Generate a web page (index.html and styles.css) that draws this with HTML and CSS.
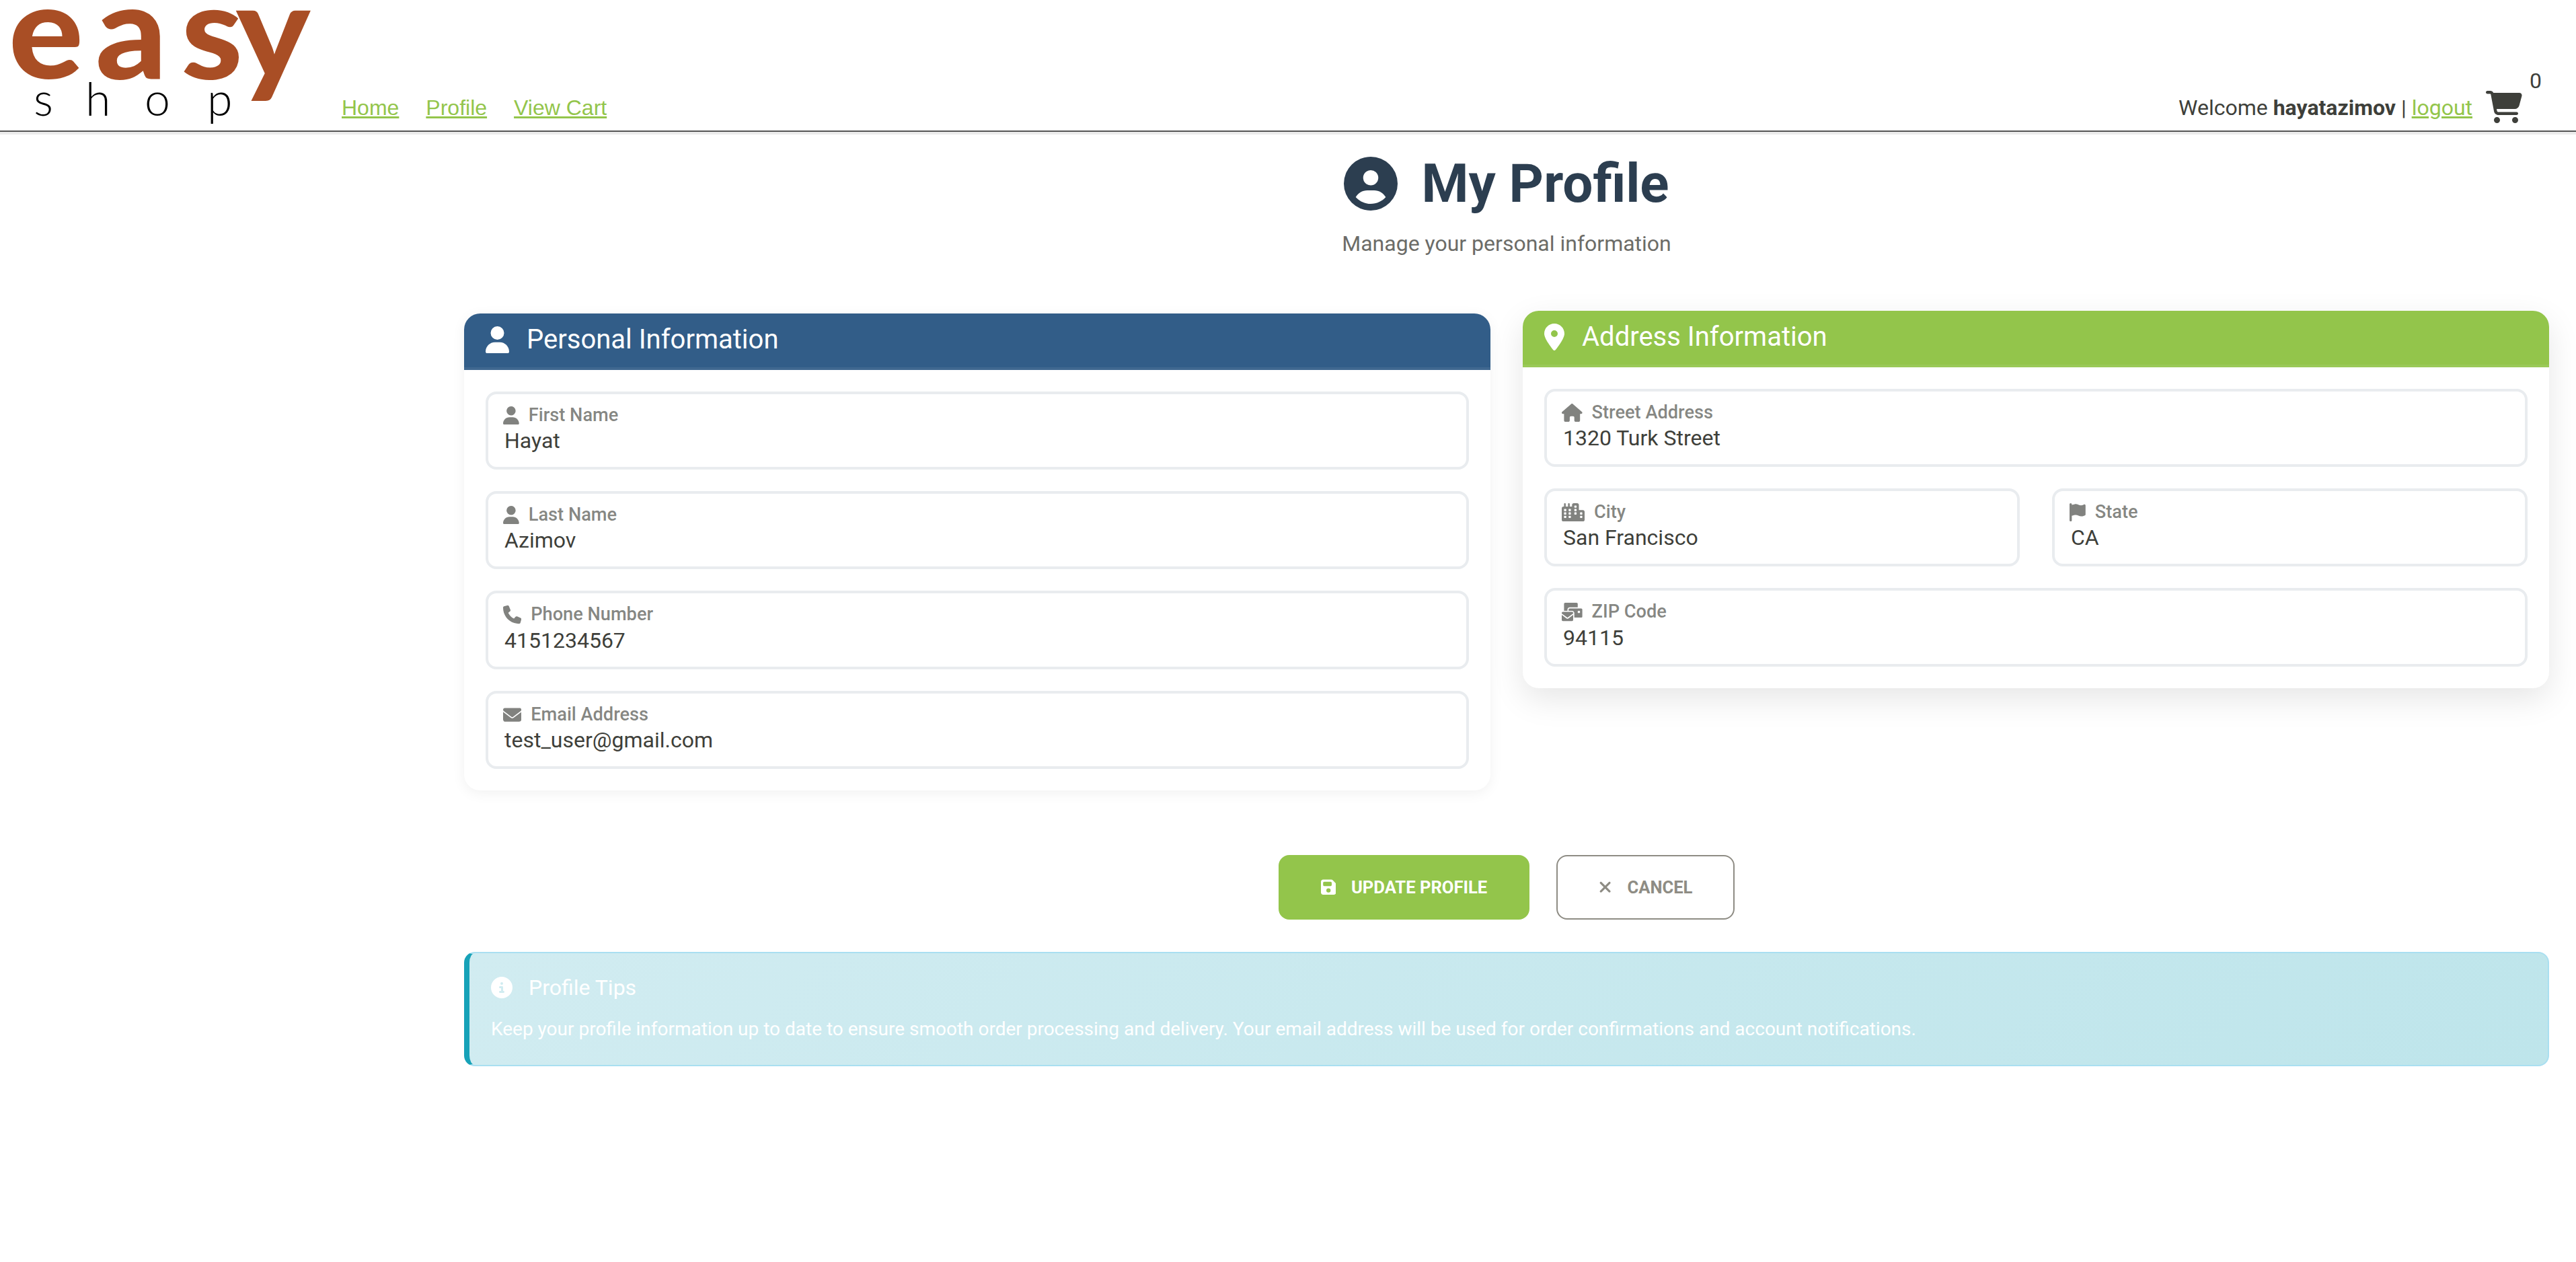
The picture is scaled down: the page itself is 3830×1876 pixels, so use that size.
FILE: index.html
```html
<!DOCTYPE html>
<html lang="en">
<head>
  <meta charset="UTF-8">
  <meta name="viewport" content="width=device-width, initial-scale=1.0">
  <title>My Profile - Easy Shop</title>
  <link rel="stylesheet" href="styles.css">
</head>
<body>
  <header class="site-header">
    <a class="logo" href="#" aria-label="easy shop">
      <svg class="logo-mark" viewBox="0 0 480 194" width="480" height="194">
        <text class="logo-easy" transform="scale(1.06 1)" x="12 134 254 331" y="117">easy</text>
        <text class="logo-shop" x="50 127 215 308" y="172">shop</text>
      </svg>
    </a>
    <nav class="main-nav">
      <a href="#">Home</a>
      <a href="#">Profile</a>
      <a href="#">View Cart</a>
    </nav>
    <div class="user-box">
      <span>Welcome <strong>hayatazimov</strong> | <a href="#">logout</a></span>
      <a class="cart" href="#" aria-label="Cart">
        <svg class="icon" viewBox="0 0 576 512"><path d="M0 24C0 10.7 10.7 0 24 0H69.5c22 0 41.5 12.8 50.6 32h411c26.3 0 45.5 25 38.6 50.4l-41 152.3c-8.5 31.4-37 53.3-69.5 53.3H170.7l5.4 28.5c2.2 11.3 12.1 19.5 23.6 19.5H488c13.3 0 24 10.7 24 24s-10.7 24-24 24H199.7c-34.6 0-64.3-24.6-70.7-58.5L77.4 54.5c-.7-3.8-4-6.5-7.9-6.5H24C10.7 48 0 37.3 0 24zM128 464a48 48 0 1 1 96 0 48 48 0 1 1 -96 0zm336-48a48 48 0 1 1 0 96 48 48 0 1 1 0-96z"/></svg>
        <span class="cart-count">0</span>
      </a>
    </div>
  </header>

  <main class="profile-page">
    <h1 class="page-title">
      <svg class="icon" viewBox="0 0 512 512"><path d="M399 384.2C376.9 345.8 335.4 320 288 320H224c-47.4 0-88.9 25.8-111 64.2c35.2 39.2 86.2 63.8 143 63.8s107.8-24.7 143-63.8zM0 256a256 256 0 1 1 512 0A256 256 0 1 1 0 256zm256 16a72 72 0 1 0 0-144 72 72 0 1 0 0 144z"/></svg>
      My Profile
    </h1>
    <p class="page-subtitle">Manage your personal information</p>

    <form class="profile-form">
      <div class="panels">
        <section class="panel">
          <h2 class="panel-title panel-title-blue">
            <svg class="icon" viewBox="0 0 448 512"><path d="M224 256A128 128 0 1 0 224 0a128 128 0 1 0 0 256zm-45.7 48C79.8 304 0 383.8 0 482.3C0 498.7 13.3 512 29.7 512H418.3c16.4 0 29.7-13.3 29.7-29.7C448 383.8 368.2 304 269.7 304H178.3z"/></svg>
            Personal Information
          </h2>
          <div class="panel-body">
            <div class="field">
              <label for="firstName"><svg class="icon" viewBox="0 0 448 512"><path d="M224 256A128 128 0 1 0 224 0a128 128 0 1 0 0 256zm-45.7 48C79.8 304 0 383.8 0 482.3C0 498.7 13.3 512 29.7 512H418.3c16.4 0 29.7-13.3 29.7-29.7C448 383.8 368.2 304 269.7 304H178.3z"/></svg>First Name</label>
              <input type="text" id="firstName" name="firstName" value="Hayat">
            </div>
            <div class="field">
              <label for="lastName"><svg class="icon" viewBox="0 0 448 512"><path d="M224 256A128 128 0 1 0 224 0a128 128 0 1 0 0 256zm-45.7 48C79.8 304 0 383.8 0 482.3C0 498.7 13.3 512 29.7 512H418.3c16.4 0 29.7-13.3 29.7-29.7C448 383.8 368.2 304 269.7 304H178.3z"/></svg>Last Name</label>
              <input type="text" id="lastName" name="lastName" value="Azimov">
            </div>
            <div class="field">
              <label for="phone"><svg class="icon" viewBox="0 0 512 512"><path d="M164.9 24.6c-7.7-18.6-28-28.5-47.4-23.2l-88 24C12.1 30.2 0 46 0 64C0 311.4 200.6 512 448 512c18 0 33.8-12.1 38.6-29.5l24-88c5.3-19.4-4.6-39.7-23.2-47.4l-96-40c-16.3-6.8-35.2-2.1-46.3 11.6L304.7 368C234.3 334.7 177.3 277.7 144 207.3L193.3 167c13.7-11.2 18.4-30 11.6-46.3l-40-96z"/></svg>Phone Number</label>
              <input type="text" id="phone" name="phone" value="4151234567">
            </div>
            <div class="field">
              <label for="email"><svg class="icon" viewBox="0 0 512 512"><path d="M48 64C21.5 64 0 85.5 0 112c0 15.1 7.1 29.3 19.2 38.4L236.8 313.6c11.4 8.5 27 8.5 38.4 0L492.8 150.4c12.1-9.1 19.2-23.3 19.2-38.4c0-26.5-21.5-48-48-48H48zM0 176V384c0 35.3 28.7 64 64 64H448c35.3 0 64-28.7 64-64V176L294.4 339.2c-22.8 17.1-54 17.1-76.8 0L0 176z"/></svg>Email Address</label>
              <input type="text" id="email" name="email" value="test_user@gmail.com">
            </div>
          </div>
        </section>

        <section class="panel panel-hover">
          <h2 class="panel-title panel-title-green">
            <svg class="icon" viewBox="0 0 384 512"><path d="M215.7 499.2C267 435 384 279.4 384 192C384 86 298 0 192 0S0 86 0 192c0 87.4 117 243 168.3 307.2c12.3 15.3 35.1 15.3 47.4 0zM192 128a64 64 0 1 1 0 128 64 64 0 1 1 0-128z"/></svg>
            Address Information
          </h2>
          <div class="panel-body">
            <div class="field">
              <label for="street"><svg class="icon" viewBox="0 0 576 512"><path d="M575.8 255.5c0 18-15 32.1-32 32.1h-32l.7 160.2c0 2.7-.2 5.4-.5 8.1V472c0 22.1-17.9 40-40 40H456c-1.1 0-2.2 0-3.3-.1c-1.4 .1-2.8 .1-4.2 .1H416 392c-22.1 0-40-17.9-40-40V448 384c0-17.7-14.3-32-32-32H256c-17.7 0-32 14.3-32 32v64 24c0 22.1-17.9 40-40 40H160 128.1c-1.5 0-3-.1-4.5-.2c-1.2 .1-2.4 .2-3.6 .2H104c-22.1 0-40-17.9-40-40V360c0-.9 0-1.9 .1-2.8V287.6H32c-18 0-32-14-32-32.1c0-9 3-17 10-24L266.4 8c7-7 15-8 22-8s15 2 21 7L564.8 231.5c8 7 12 15 11 24z"/></svg>Street Address</label>
              <input type="text" id="street" name="street" value="1320 Turk Street">
            </div>
            <div class="field-row">
              <div class="field">
                <label for="city"><svg class="icon" viewBox="0 0 640 512"><path d="M480 48c0-26.5-21.5-48-48-48H336c-26.5 0-48 21.5-48 48V96H224V24c0-13.3-10.7-24-24-24s-24 10.7-24 24V96H112V24c0-13.3-10.7-24-24-24S64 10.7 64 24V96H48C21.5 96 0 117.5 0 144V464c0 26.5 21.5 48 48 48H592c26.5 0 48-21.5 48-48V240c0-26.5-21.5-48-48-48H480V48zm96 320v32c0 8.8-7.2 16-16 16H528c-8.8 0-16-7.2-16-16V368c0-8.8 7.2-16 16-16h32c8.8 0 16 7.2 16 16zM240 416H208c-8.8 0-16-7.2-16-16V368c0-8.8 7.2-16 16-16h32c8.8 0 16 7.2 16 16v32c0 8.8-7.2 16-16 16zM128 400c0 8.8-7.2 16-16 16H80c-8.8 0-16-7.2-16-16V368c0-8.8 7.2-16 16-16h32c8.8 0 16 7.2 16 16v32zM560 256c8.8 0 16 7.2 16 16v32c0 8.8-7.2 16-16 16H528c-8.8 0-16-7.2-16-16V272c0-8.8 7.2-16 16-16h32zM256 176v32c0 8.8-7.2 16-16 16H208c-8.8 0-16-7.2-16-16V176c0-8.8 7.2-16 16-16h32c8.8 0 16 7.2 16 16zM112 160c8.8 0 16 7.2 16 16v32c0 8.8-7.2 16-16 16H80c-8.8 0-16-7.2-16-16V176c0-8.8 7.2-16 16-16h32zM256 304c0 8.8-7.2 16-16 16H208c-8.8 0-16-7.2-16-16V272c0-8.8 7.2-16 16-16h32c8.8 0 16 7.2 16 16v32zM112 320H80c-8.8 0-16-7.2-16-16V272c0-8.8 7.2-16 16-16h32c8.8 0 16 7.2 16 16v32c0 8.8-7.2 16-16 16zm304-48v32c0 8.8-7.2 16-16 16H368c-8.8 0-16-7.2-16-16V272c0-8.8 7.2-16 16-16h32c8.8 0 16 7.2 16 16zM368 64h32c8.8 0 16 7.2 16 16v32c0 8.8-7.2 16-16 16H368c-8.8 0-16-7.2-16-16V80c0-8.8 7.2-16 16-16zm48 112v32c0 8.8-7.2 16-16 16H368c-8.8 0-16-7.2-16-16V176c0-8.8 7.2-16 16-16h32c8.8 0 16 7.2 16 16z"/></svg>City</label>
                <input type="text" id="city" name="city" value="San Francisco">
              </div>
              <div class="field">
                <label for="state"><svg class="icon" viewBox="0 0 448 512"><path d="M64 32C64 14.3 49.7 0 32 0S0 14.3 0 32V64 368 480c0 17.7 14.3 32 32 32s32-14.3 32-32V352l64.3-16.1c41.1-10.3 84.6-5.5 122.5 13.4c44.2 22.1 95.5 24.8 141.7 7.4l34.7-13c12.5-4.7 20.8-16.6 20.8-30V66.1c0-23-24.2-38-44.8-27.7l-9.6 4.8c-46.3 23.2-100.8 23.2-147.1 0c-35.1-17.6-75.4-22-113.5-12.5L64 48V32z"/></svg>State</label>
                <input type="text" id="state" name="state" value="CA">
              </div>
            </div>
            <div class="field">
              <label for="zip"><svg class="icon" viewBox="32 0 576 512"><path d="M128 0C110.3 0 96 14.3 96 32V224h96V192c0-35.3 28.7-64 64-64H480V32c0-17.7-14.3-32-32-32H128zM256 160c-17.7 0-32 14.3-32 32v32h96c35.3 0 64 28.7 64 64V416H576c17.7 0 32-14.3 32-32V192c0-17.7-14.3-32-32-32H256zm240 64h32c8.8 0 16 7.2 16 16v32c0 8.8-7.2 16-16 16H496c-8.8 0-16-7.2-16-16V240c0-8.8 7.2-16 16-16zM64 256c-17.7 0-32 14.3-32 32v13L187.1 415.9c1.4 1 3.1 1.6 4.9 1.6s3.5-.6 4.9-1.6L352 301V288c0-17.7-14.3-32-32-32H64zm288 84.8L216 441.6c-6.9 5.1-15.3 7.9-24 7.9s-17-2.8-24-7.9L32 340.8V480c0 17.7 14.3 32 32 32H320c17.7 0 32-14.3 32-32V340.8z"/></svg>ZIP Code</label>
              <input type="text" id="zip" name="zip" value="94115">
            </div>
          </div>
        </section>
      </div>

      <div class="form-actions">
        <button type="submit" class="btn btn-save">
          <svg class="icon" viewBox="0 0 448 512"><path d="M64 32C28.7 32 0 60.7 0 96V416c0 35.3 28.7 64 64 64H384c35.3 0 64-28.7 64-64V173.3c0-17-6.7-33.3-18.7-45.3L352 50.7C340 38.7 323.7 32 306.7 32H64zm0 96c0-17.7 14.3-32 32-32H288c17.7 0 32 14.3 32 32v64c0 17.7-14.3 32-32 32H96c-17.7 0-32-14.3-32-32V128zM224 288a64 64 0 1 1 0 128 64 64 0 1 1 0-128z"/></svg>
          Update Profile
        </button>
        <button type="button" class="btn btn-cancel">
          <svg class="icon" viewBox="0 0 384 512"><path d="M342.6 150.6c12.5-12.5 12.5-32.8 0-45.3s-32.8-12.5-45.3 0L192 210.7 86.6 105.4c-12.5-12.5-32.8-12.5-45.3 0s-12.5 32.8 0 45.3L146.7 256 41.4 361.4c-12.5 12.5-12.5 32.8 0 45.3s32.8 12.5 45.3 0L192 301.3 297.4 406.6c12.5 12.5 32.8 12.5 45.3 0s12.5-32.8 0-45.3L237.3 256 342.6 150.6z"/></svg>
          Cancel
        </button>
      </div>
    </form>

    <aside class="tips">
      <h3 class="tips-title">
        <svg class="icon" viewBox="0 0 512 512"><path d="M256 512A256 256 0 1 0 256 0a256 256 0 1 0 0 512zM216 336h24V272H216c-13.3 0-24-10.7-24-24s10.7-24 24-24h48c13.3 0 24 10.7 24 24v88h8c13.3 0 24 10.7 24 24s-10.7 24-24 24H216c-13.3 0-24-10.7-24-24s10.7-24 24-24zm40-208a32 32 0 1 1 0 64 32 32 0 1 1 0-64z"/></svg>
        Profile Tips
      </h3>
      <p>Keep your profile information up to date to ensure smooth order processing and delivery. Your email address will be used for order confirmations and account notifications.</p>
    </aside>
  </main>
</body>
</html>
```

FILE: styles.css
```css
/* Global Styles */
body {
  font-family: Roboto, "Liberation Sans", sans-serif;
  font-size: 32px;
  line-height: 1.5;
  margin: 0;
  background: #ffffff;
  color: #3e3f3a;
}

a {
  color: #93c54b;
}

.icon {
  display: block;
  flex: none;
  height: 1em;
  width: auto;
  fill: currentColor;
}

/* Header */
.site-header {
  display: flex;
  align-items: flex-end;
  height: 194px;
  padding: 0 51px 0 0;
  border-bottom: 2px solid #555555;
  box-shadow: 0 4px 0 #ececec;
}

.logo {
  align-self: flex-start;
  display: block;
  width: 508px;
  height: 194px;
}

.logo-mark {
  display: block;
}

.logo-easy {
  font-family: Lato, sans-serif;
  font-weight: 900;
  font-size: 196px;
  fill: #a94e25;
}

.logo-shop {
  font-family: Lato, sans-serif;
  font-weight: 300;
  font-size: 68px;
  fill: #000000;
}

.main-nav {
  display: flex;
  gap: 40px;
  font-family: "Liberation Sans", sans-serif;
  line-height: 36px;
  padding-bottom: 16px;
}

.user-box {
  display: flex;
  align-items: flex-end;
  gap: 20px;
  margin-left: auto;
  padding-bottom: 10px;
}

.cart {
  position: relative;
  display: block;
  font-size: 48px;
  line-height: 1;
  color: #3e3f3a;
  margin-right: 29px;
  margin-bottom: 1px;
}

.cart-count {
  position: absolute;
  top: -39px;
  left: 65px;
  font-size: 32px;
  line-height: 48px;
}

/* Page */
.profile-page {
  padding: 29px 40px 0 690px;
}

.page-title {
  display: flex;
  justify-content: center;
  align-items: center;
  gap: 35px;
  margin: 0 0 17px;
  font-size: 80px;
  font-weight: 700;
  line-height: 96px;
  color: #2c3e50;
}

.page-subtitle {
  margin: 0 0 80px;
  text-align: center;
  color: #6c6c68;
}

/* Panels */
.panels {
  display: grid;
  grid-template-columns: 1fr 1fr;
  align-items: start;
  gap: 48px;
}

.panel {
  border-radius: 24px;
  background: #ffffff;
  box-shadow: 0 4px 20px rgba(0, 0, 0, 0.06);
  overflow: hidden;
}

/* the address panel is caught in its hover state */
.panel-hover {
  transform: translateY(-4px);
  box-shadow: 0 16px 48px rgba(0, 0, 0, 0.1);
}

.panel-title {
  display: flex;
  align-items: center;
  gap: 26px;
  margin: 0;
  padding: 15px 32px 17px;
  border-bottom: 4px solid rgba(255, 255, 255, 0.07);
  font-size: 40px;
  font-weight: 400;
  line-height: 48px;
  color: #ffffff;
}

.panel-title-blue {
  background: #325d88;
}

.panel-title-green {
  background: #93c54b;
}

.panel-body {
  display: flex;
  flex-direction: column;
  gap: 32px;
  padding: 32px;
}

.field-row {
  display: grid;
  grid-template-columns: 1fr 1fr;
  gap: 48px;
}

.field {
  padding: 18px 22px 15px;
  border: 4px solid #e9ecef;
  border-radius: 16px;
}

.field label {
  display: flex;
  align-items: center;
  gap: 14px;
  font-size: 27.2px;
  font-weight: 500;
  line-height: 27px;
  color: rgba(62, 63, 58, 0.65);
}

.field input {
  display: block;
  box-sizing: border-box;
  width: 100%;
  height: 48px;
  padding: 0 0 0 2px;
  border: none;
  outline: none;
  background: transparent;
  font-family: inherit;
  font-size: 32px;
  line-height: 48px;
  color: #3e3f3a;
}

/* Buttons */
.form-actions {
  display: flex;
  justify-content: center;
  gap: 40px;
  margin-top: 96px;
}

.btn {
  display: flex;
  align-items: center;
  gap: 23px;
  height: 96px;
  padding: 0 61px;
  border: 2px solid transparent;
  border-radius: 16px;
  font-family: inherit;
  font-size: 25.6px;
  font-weight: 700;
  text-transform: uppercase;
  cursor: pointer;
}

.btn-save {
  background: #93c54b;
  border-color: #93c54b;
  color: #ffffff;
}

.btn-cancel {
  background: #ffffff;
  border-color: #8e8c84;
  color: #8e8c84;
}

/* Tips */
.tips {
  margin-top: 48px;
  padding: 32px;
  border: 2px solid #a9dff1;
  border-left: 8px solid #17a2b8;
  border-radius: 16px;
  background: linear-gradient(135deg, #d1ecf1, #bee5eb);
  color: #ffffff;
}

.tips-title {
  display: flex;
  align-items: center;
  gap: 24px;
  margin: 0 0 22px;
  font-size: 32px;
  font-weight: 400;
  line-height: 38px;
}

.tips p {
  margin: 0;
  font-size: 28px;
  line-height: 42px;
}
```
